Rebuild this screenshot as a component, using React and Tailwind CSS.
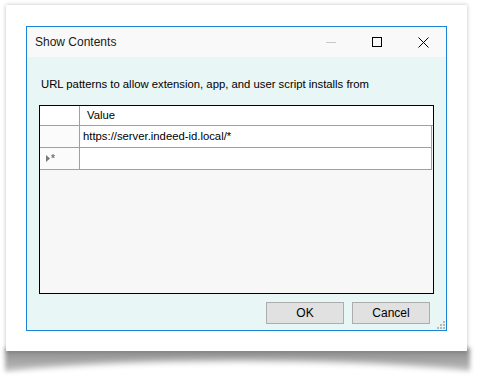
import React from 'react';

// Windows-style title bar glyphs
function TitleButtons() {
  return (
    <div className="flex items-center h-full">
      <div className="w-[46px] h-full flex items-center justify-center">
        <div className="w-[10px] h-px bg-[#c8c8c8]" />
      </div>
      <div className="w-[46px] h-full flex items-center justify-center">
        <div className="w-[10px] h-[10px] border border-black" />
      </div>
      <div className="w-[46px] h-full flex items-center justify-center">
        <svg width="11" height="11" viewBox="0 0 11 11"><path d="M0.5 0.5L10.5 10.5M10.5 0.5L0.5 10.5" stroke="#000" strokeWidth="1" /></svg>
      </div>
    </div>
  );
}

function Grid() {
  return (
    <div className="mx-[12px] mt-[13px] h-[189px] border border-black bg-[#f7f7f7] flex flex-col">
      <div className="flex h-[20px] border-b border-[#a0a0a0] bg-white">
        <div className="w-[40px] border-r border-[#a0a0a0]" />
        <div className="flex-1 pl-[7px] leading-[19px]">Value</div>
      </div>
      <div className="flex h-[22px] border-b border-r border-[#a0a0a0] bg-white mr-[1px]">
        <div className="w-[40px] border-r border-[#a0a0a0] bg-[#fbfbfb]" />
        <div className="flex-1 pl-[3px] leading-[21px]">https://server.indeed-id.local/*</div>
      </div>
      <div className="flex h-[22px] border-b border-r border-[#a0a0a0] bg-white mr-[1px]">
        <div className="w-[40px] border-r border-[#a0a0a0] bg-[#fbfbfb] flex items-center pl-[6px] gap-[1px]">
          <svg width="4" height="7" viewBox="0 0 4 7"><path d="M0 0L4 3.5L0 7Z" fill="#777" /></svg>
          <span className="text-[10px] leading-none font-bold text-[#777]">*</span>
        </div>
        <div className="flex-1" />
      </div>
      <div className="flex-1" />
    </div>
  );
}

export default function App() {
  return (
    <div className="w-[481px] h-[380px] bg-white relative overflow-hidden font-['Liberation_Sans',Arial,sans-serif] text-[11.3px] text-black">
      {/* curled paper shadow */}
      <div className="absolute left-[5px] right-[11px] top-[348px] h-[26px] bg-gradient-to-b from-[#8a8a8a] to-[#c4c4c4] blur-[2px]" />
      <div className="absolute left-[-40px] right-[-40px] top-[361px] h-[48px] rounded-[50%] bg-white blur-[3px]" />
      <div className="relative ml-[6px] mt-[5px] w-[461px] h-[346px] bg-white shadow-[0_0_4px_rgba(0,0,0,0.25)] pt-[21px] pl-[20px]">
        <div className="w-[421px] h-[305px] border border-[#1a84d8] bg-[#e8f6f6] flex flex-col">
          <div className="h-[30px] bg-[#f9f9f9] flex items-center justify-between">
            <span className="pl-[8px] text-[12px] text-[#1a1a1a]">Show Contents</span>
            <TitleButtons />
          </div>
          <div className="flex-1 flex flex-col relative">
            <div className="pl-[14px] pt-[20px] leading-[15px]">URL patterns to allow extension, app, and user script installs from</div>
            <Grid />
            <div className="flex justify-end gap-[8px] mt-[8px] pr-[16px]">
              <button className="w-[78px] h-[22px] bg-[#e1e1e1] border border-[#adadad] leading-[20px] text-[12px]">OK</button>
              <button className="w-[78px] h-[22px] bg-[#e1e1e1] border border-[#adadad] leading-[20px] text-[12px]">Cancel</button>
            </div>
            <svg className="absolute right-[1px] bottom-[1px]" width="9" height="9" viewBox="0 0 9 9">
              <rect x="7" y="1" width="2" height="2" fill="#b8b8b8" />
              <rect x="4" y="4" width="2" height="2" fill="#b8b8b8" />
              <rect x="7" y="4" width="2" height="2" fill="#b8b8b8" />
              <rect x="1" y="7" width="2" height="2" fill="#b8b8b8" />
              <rect x="4" y="7" width="2" height="2" fill="#b8b8b8" />
              <rect x="7" y="7" width="2" height="2" fill="#b8b8b8" />
            </svg>
          </div>
        </div>
      </div>
    </div>
  );
}
